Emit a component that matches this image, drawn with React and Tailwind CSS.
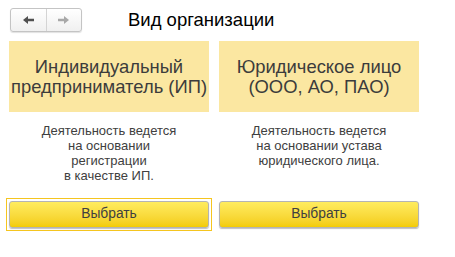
import React from 'react'

const ArrowLeft = ({ color }) => (
  <svg width="11" height="8" viewBox="0 0 11 8">
    <polygon points="0,4 5,0 5,2.8 11,2.8 11,5.2 5,5.2 5,8" fill={color} />
  </svg>
)

const ArrowRight = ({ color }) => (
  <svg width="11" height="8" viewBox="0 0 11 8">
    <polygon points="11,4 6,0 6,2.8 0,2.8 0,5.2 6,5.2 6,8" fill={color} />
  </svg>
)

const Option = ({ title, text, focused }) => (
  <div className="w-[200px] flex flex-col">
    <div className="h-[71px] bg-[#fbe7a1] flex items-center justify-center text-center text-[18.4px] leading-5 text-[#3c3c3c] whitespace-nowrap">
      <div>{title}</div>
    </div>
    <div className="h-[89px] pt-[11px] text-center text-[13px] leading-[15px] text-[#404040]">
      {text}
    </div>
    <div className={focused ? 'relative' : ''}>
      {focused && (
        <div className="absolute -left-[3px] -top-[3px] -right-[3px] -bottom-[3px] border border-[#f5c51f]" />
      )}
      <button
        type="button"
        className="relative w-full h-[27px] rounded-[3px] border border-[#b4b4b4] bg-gradient-to-b from-[#ffec5e] to-[#f3cc00] shadow-[0_1px_1px_rgba(0,0,0,0.25)] text-[13.8px] text-[#404040]"
      >
        Выбрать
      </button>
    </div>
  </div>
)

export default function App() {
  return (
    <div className="w-[455px] h-[257px] bg-white font-['Liberation_Sans',Arial,sans-serif] overflow-hidden">
      {/* Header */}
      <div className="flex items-center pt-2 pl-[10px]">
        <div className="flex h-6 w-[72px] rounded-[3px] border border-[#c4c4c4] bg-gradient-to-b from-white to-[#f0f0f0] shadow-[0_1px_1px_rgba(0,0,0,0.12)]">
          <div className="flex-1 flex items-center justify-center border-r border-[#d4d4d4]">
            <ArrowLeft color="#505050" />
          </div>
          <div className="flex-1 flex items-center justify-center">
            <ArrowRight color="#a8a8a8" />
          </div>
        </div>
        <div className="ml-[46px] text-[18.5px] leading-6 text-black">Вид организации</div>
      </div>

      {/* Options */}
      <div className="flex gap-[10px] pl-[9px] mt-[9px]">
        <Option
          focused
          title={<>Индивидуальный<br />предприниматель (ИП)</>}
          text={<>Деятельность ведется<br />на основании<br />регистрации<br />в качестве ИП.</>}
        />
        <Option
          title={<>Юридическое лицо<br />(ООО, АО, ПАО)</>}
          text={<>Деятельность ведется<br />на основании устава<br />юридического лица.</>}
        />
      </div>
    </div>
  )
}
